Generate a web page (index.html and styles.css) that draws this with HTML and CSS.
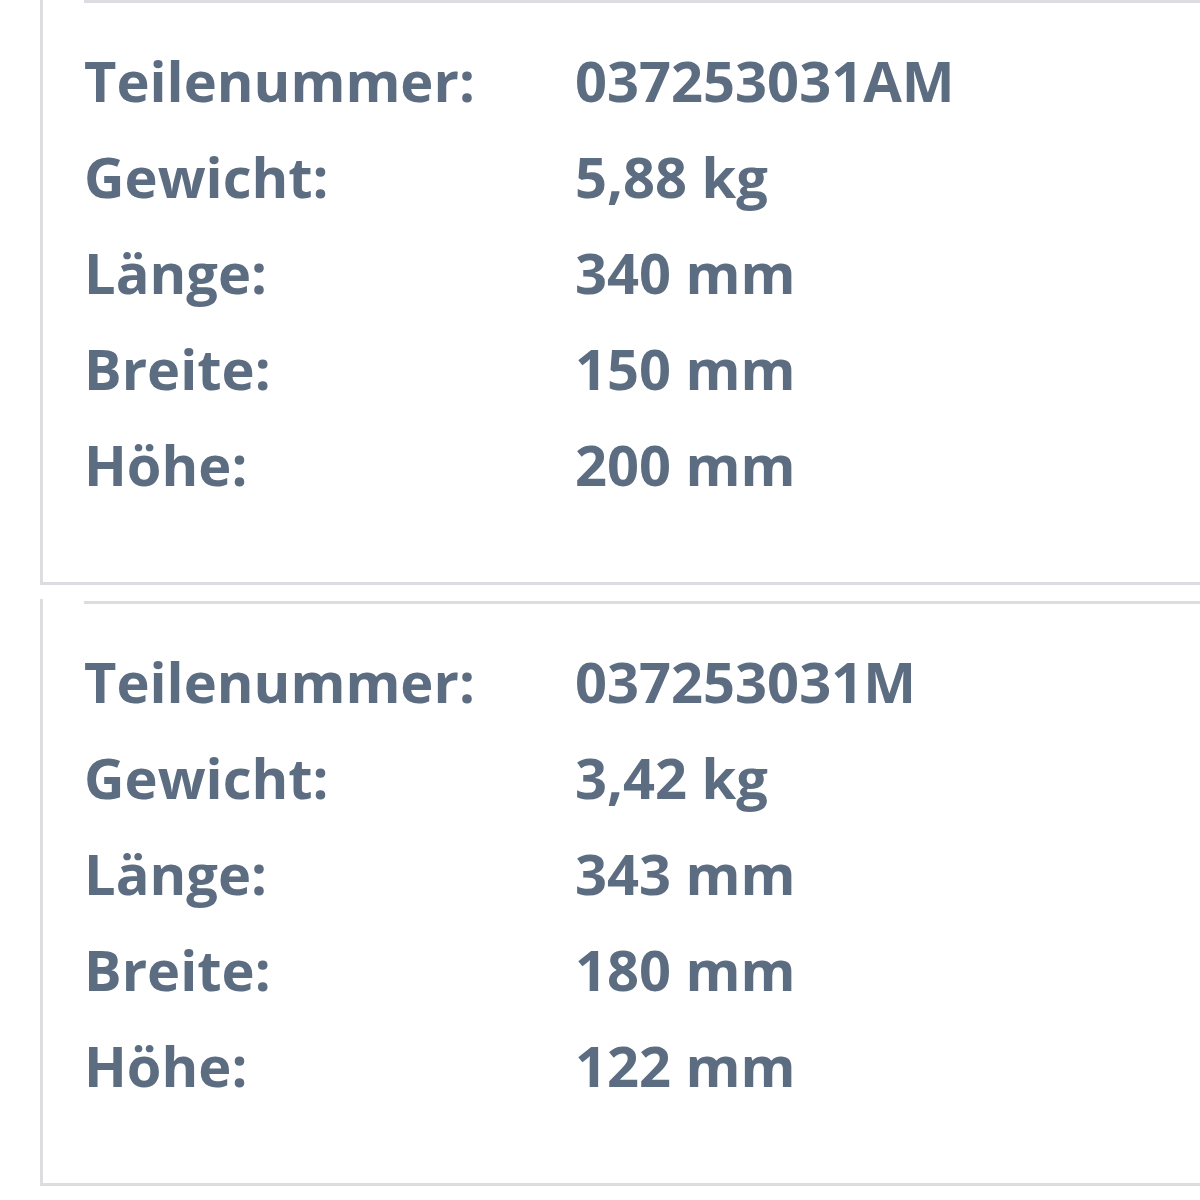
FILE: index.html
```html
<!DOCTYPE html>
<html lang="de">
<head>
<meta charset="utf-8">
<title>Teile</title>
<link rel="stylesheet" href="styles.css">
</head>
<body>
  <div class="cards">
    <section class="card card-first">
      <div class="card-body">
        <dl class="specs">
          <dt>Teilenummer:</dt><dd>037253031AM</dd>
          <dt>Gewicht:</dt><dd>5,88 kg</dd>
          <dt>Länge:</dt><dd>340 mm</dd>
          <dt>Breite:</dt><dd>150 mm</dd>
          <dt>Höhe:</dt><dd>200 mm</dd>
        </dl>
      </div>
    </section>
    <section class="card">
      <div class="card-body">
        <dl class="specs">
          <dt>Teilenummer:</dt><dd>037253031M</dd>
          <dt>Gewicht:</dt><dd>3,42 kg</dd>
          <dt>Länge:</dt><dd>343 mm</dd>
          <dt>Breite:</dt><dd>180 mm</dd>
          <dt>Höhe:</dt><dd>122 mm</dd>
        </dl>
      </div>
    </section>
  </div>
</body>
</html>
```
FILE: styles.css
```css
html, body {
  margin: 0;
  padding: 0;
  background: #ffffff;
  overflow: hidden;
}

body {
  font-family: "Open Sans", "Noto Sans", sans-serif;
  color: #5c6c81;
  width: 1200px;
  height: 1200px;
}

.cards {
  display: flex;
  flex-direction: column;
  gap: 14px;
  padding-left: 40px;
}

.card {
  width: 1200px;
  border-left: 3px solid #dcdce1;
  border-bottom: 3px solid #dcdce1;
  padding: 2px 0 70px 41px;
}

.card-first {
  margin-top: -2px;
}

.card-body {
  border-top: 3px solid #dcdce1;
  padding-top: 29px;
}

.specs {
  margin: 0;
  display: grid;
  grid-template-columns: 491px 1fr;
  font-size: 56px;
  font-weight: 700;
  line-height: 96px;
}

.specs dt,
.specs dd {
  margin: 0;
  white-space: nowrap;
}
```
